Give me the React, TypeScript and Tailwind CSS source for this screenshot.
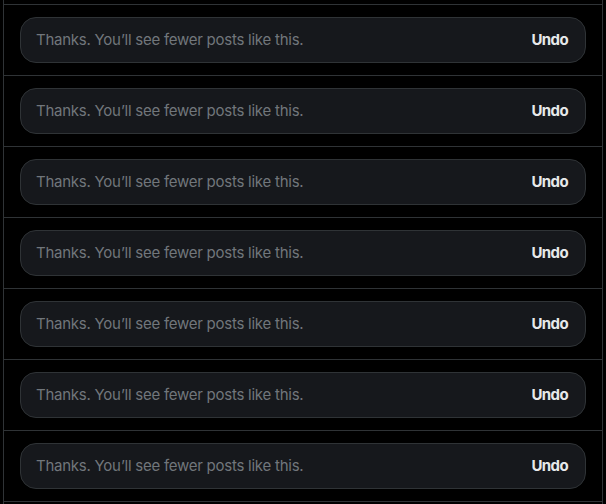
export default function App() {
  const rows = Array.from({ length: 7 }, (_, i) => i);
  return (
    <div className="min-h-screen bg-black" style={{ fontFamily: "Inter, 'Noto Sans', sans-serif" }}>
      <div className="mx-auto w-[600px] border-x border-[#2f3336] h-[504px] overflow-hidden">
        <div className="h-[5px] border-b border-[#2f3336]" />
        {rows.map((i) => (
          <div key={i} className="border-b border-[#2f3336] px-4 py-3">
            <div className="flex items-center justify-between rounded-2xl border border-[#2f3336] bg-[#16181c] pl-[15px] pr-[17px] py-3">
              <span className="text-[15px] leading-5 tracking-[-0.25px] text-[#71767b]">Thanks. You’ll see fewer posts like this.</span>
              <button className="text-[15px] leading-5 font-bold tracking-[-0.6px] text-[#e7e9ea]">Undo</button>
            </div>
          </div>
        ))}
      </div>
    </div>
  );
}
